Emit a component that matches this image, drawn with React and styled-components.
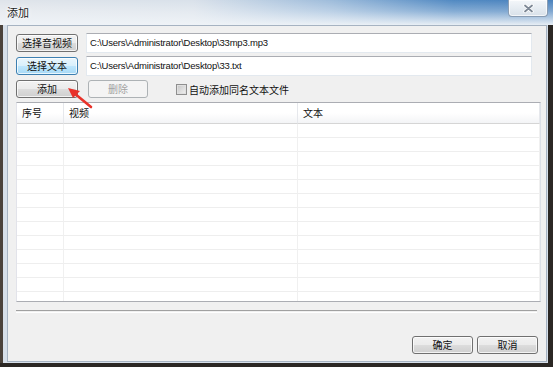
import styled, { createGlobalStyle } from "styled-components";

const GlobalStyle = createGlobalStyle`
    html, body {
        margin: 0;
        padding: 0;
        background: #2b2724;
    }
    body {
        font-family: "Liberation Sans", "Noto Sans CJK SC", sans-serif;
    }
`;

const cjk = `"Noto Sans CJK SC", "Liberation Sans", sans-serif`;

const Window = styled.div`
    position: relative;
    width: 553px;
    height: 367px;
    display: flex;
    flex-direction: column;
    background: #d6dfe9;
    box-shadow: inset -5px -4px 0 #2b2724, inset 3px 0 0 #4a423b;
    overflow: hidden;
`;

const TitleBar = styled.div`
    height: 25px;
    flex-shrink: 0;
    display: flex;
    align-items: flex-start;
    background:
        linear-gradient(180deg, rgba(255, 255, 255, 0) 0%, rgba(255, 255, 255, 0.3) 45%, rgba(240, 244, 248, 0.95) 100%),
        linear-gradient(90deg, #dfe4ea 0%, #d9e1ea 35%, #9ebcdb 60%, #5189c2 82%, #4a82bd 100%);
`;

const Title = styled.span`
    font-family: ${cjk};
    font-size: 11px;
    color: #1b1b1b;
    padding: 4px 0 0 7px;
    text-shadow: 0 0 6px #fff, 0 0 3px #fff;
`;

const CloseButton = styled.div`
    margin-left: auto;
    margin-right: 5px;
    width: 38px;
    height: 16px;
    border: 1px solid #8a9db3;
    border-top: none;
    border-radius: 0 0 4px 4px;
    background: linear-gradient(180deg, #f4f7fa 0%, #e6ecf2 50%, #d8e0e9 100%);
    display: flex;
    align-items: center;
    justify-content: center;
    box-shadow: inset 0 0 0 1px rgba(255, 255, 255, 0.7);
`;

const Client = styled.div`
    flex: 1;
    margin: 0 6px 5px 7px;
    border: 1px solid #a6b3c2;
    background: #f0f0f0;
    padding: 7px 0 0 8px;
    display: flex;
    flex-direction: column;
`;

const Row = styled.div`
    display: flex;
    align-items: center;
    height: 20px;
    margin-bottom: 3px;
    gap: ${(p) => p.$gap || 8}px;
`;

const Button = styled.button`
    box-sizing: border-box;
    width: ${(p) => p.$width || 62}px;
    height: 18px;
    padding: 0;
    margin: 0;
    font-family: ${cjk};
    font-size: 10px;
    line-height: 16px;
    color: #111;
    border: 1px solid #707070;
    border-radius: 3px;
    background: linear-gradient(180deg, #f2f2f2 0%, #ebebeb 48%, #dcdcdc 52%, #cfcfcf 100%);
    box-shadow: inset 0 0 0 1px rgba(255, 255, 255, 0.75);

    &.focused {
        border-color: #3c7fb1;
        background: linear-gradient(180deg, #eaf6fd 0%, #d9f0fc 48%, #bee6fd 52%, #a7d9f5 100%);
    }

    &:disabled {
        color: #a3a3a3;
        border-color: #adb2b5;
        background: #f4f4f4;
        box-shadow: none;
    }
`;

const TextBox = styled.div`
    box-sizing: border-box;
    width: 446px;
    height: 20px;
    background: #fff;
    border: 1px solid #e3e9ef;
    border-top-color: #abadb3;
    padding: 0 3px;
    font-size: 9.5px;
    letter-spacing: -0.2px;
    line-height: 18px;
    color: #111;
    white-space: nowrap;
`;

const CheckLabel = styled.label`
    display: flex;
    align-items: center;
    gap: 2px;
    font-family: ${cjk};
    font-size: 10px;
    color: #111;
`;

const CheckBox = styled.span`
    box-sizing: border-box;
    width: 11px;
    height: 11px;
    border: 1px solid #8f8f8f;
    background: linear-gradient(135deg, #c4c4c4 0%, #dedede 55%, #f0f0f0 100%);
    box-shadow: inset 0 0 0 1px #e0e0e0;
`;

const ListView = styled.div`
    box-sizing: border-box;
    width: 525px;
    height: 200px;
    border: 1px solid #828790;
    border-color: #abadb3 #dbdfe6 #abadb3 #e2e3ea;
    background: #fff;
    overflow: hidden;
    display: flex;
    flex-direction: column;
`;

const Grid = styled.div`
    display: grid;
    grid-template-columns: 47px 234px 1fr;
`;

const HeaderCell = styled.div`
    height: 20px;
    padding-left: 5px;
    font-family: ${cjk};
    font-size: 10px;
    line-height: 20px;
    color: #111;
    background: linear-gradient(180deg, #ffffff 0%, #ffffff 50%, #f3f4f6 100%);
    border-bottom: 1px solid #d5d5d5;
    border-right: 1px solid #e6e8ec;
`;

const Cell = styled.div`
    height: 13px;
    border-bottom: 1px solid #eeeeee;
    border-right: 1px solid #f0f0f0;
`;

const Separator = styled.div`
    width: 521px;
    height: 1px;
    margin-top: 8px;
    border-top: 1px solid #a0a0a0;
    border-bottom: 1px solid #ffffff;
`;

const Footer = styled.div`
    display: flex;
    justify-content: flex-end;
    gap: 4px;
    padding-right: 8px;
    margin-top: 23px;
`;

const ArrowLayer = styled.svg`
    position: absolute;
    left: 60px;
    top: 82px;
    pointer-events: none;
`;

const columns = ["序号", "视频", "文本"];
const rows = Array.from({ length: 13 }, (_, i) => i);

const App = () => {
    return (
        <>
            <GlobalStyle />
            <Window>
                <TitleBar>
                    <Title>添加</Title>
                    <CloseButton>
                        <svg width="11" height="9" viewBox="0 0 11 9">
                            <path d="M2 1.5 L9 7.5 M9 1.5 L2 7.5" stroke="#fff" strokeWidth="3.4" strokeLinecap="round" />
                            <path d="M2 1.5 L9 7.5 M9 1.5 L2 7.5" stroke="#7d8896" strokeWidth="1.8" strokeLinecap="round" />
                        </svg>
                    </CloseButton>
                </TitleBar>
                <Client>
                    <Row>
                        <Button>选择音视频</Button>
                        <TextBox>C:\Users\Administrator\Desktop\33mp3.mp3</TextBox>
                    </Row>
                    <Row>
                        <Button className="focused">选择文本</Button>
                        <TextBox>C:\Users\Administrator\Desktop\33.txt</TextBox>
                    </Row>
                    <Row $gap={10}>
                        <Button>添加</Button>
                        <Button $width={60} disabled>删除</Button>
                        <CheckLabel style={{ marginLeft: 18 }}>
                            <CheckBox />
                            自动添加同名文本文件
                        </CheckLabel>
                    </Row>
                    <ListView>
                        <Grid>
                            {columns.map((c) => (
                                <HeaderCell key={c}>{c}</HeaderCell>
                            ))}
                            {rows.map((r) =>
                                columns.map((c) => <Cell key={`${r}-${c}`} />)
                            )}
                        </Grid>
                    </ListView>
                    <Separator />
                    <Footer>
                        <Button $width={61}>确定</Button>
                        <Button $width={61}>取消</Button>
                    </Footer>
                </Client>
                <ArrowLayer width="40" height="30" viewBox="0 0 40 30">
                    <path d="M31 25 L14 11" stroke="#e8322a" strokeWidth="2.6" strokeLinecap="round" />
                    <polygon points="8,6 20,9 13,16" fill="#e8322a" />
                </ArrowLayer>
            </Window>
        </>
    );
};

export default App;
